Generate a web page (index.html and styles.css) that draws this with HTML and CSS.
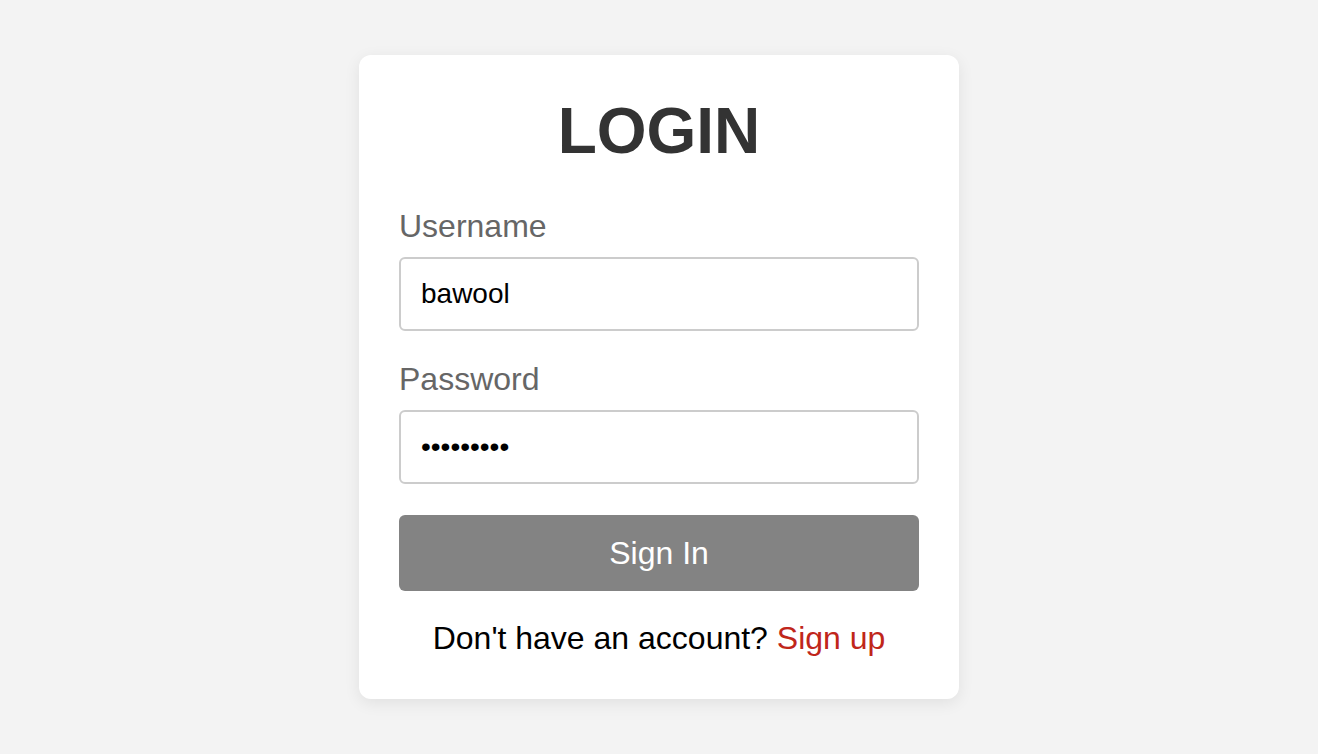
FILE: index.html
```html
<!DOCTYPE html>
<html lang="en">
<head>
  <meta charset="UTF-8" />
  <meta name="viewport" content="width=device-width, initial-scale=1.0" />
  <title>Login</title>
  <link rel="stylesheet" href="styles.css">
</head>
<body>
  <div class="container">
    <form class="login-box" onsubmit="return false;">
      <h1>LOGIN</h1>
      <div class="field">
        <label for="username">Username</label>
        <input type="text" id="username" value="bawool">
      </div>
      <div class="field">
        <label for="password">Password</label>
        <input type="password" id="password" value="bawool123">
      </div>
      <button type="submit">Sign In</button>
      <p class="signup">Don't have an account? <a href="#signup">Sign up</a></p>
    </form>
  </div>
</body>
</html>
```
FILE: styles.css
```css
body {
  font-family: 'Liberation Sans', Arial, Helvetica, sans-serif;
  background: #f3f3f3;
  margin: 0;
  padding: 0;
}
.container {
  display: flex;
  justify-content: center;
  align-items: center;
  height: 100vh;
}
.login-box {
  background: #ffffff;
  width: 600px;
  box-sizing: border-box;
  padding: 40px;
  border-radius: 12px;
  box-shadow: 0 4px 16px rgba(0,0,0,0.08);
}
h1 {
  margin: 4px 0 44px;
  font-size: 64px;
  line-height: 65px;
  text-align: center;
  color: #333333;
}
.field {
  display: flex;
  flex-direction: column;
  margin-bottom: 30px;
}
.field:last-of-type {
  margin-bottom: 31px;
}
label {
  font-size: 32px;
  line-height: 37px;
  color: #666666;
  margin-bottom: 12px;
}
input {
  height: 74px;
  box-sizing: border-box;
  padding: 0 20px;
  border: 2px solid #cccccc;
  border-radius: 6px;
  font-family: inherit;
  font-size: 28px;
  color: #000000;
  outline: none;
}
button {
  display: block;
  width: 100%;
  height: 76px;
  border: none;
  border-radius: 6px;
  background-color: #838383;
  color: #ffffff;
  font-family: inherit;
  font-size: 32px;
  cursor: pointer;
}
.signup {
  margin: 29px 0 2px;
  text-align: center;
  font-size: 32px;
  line-height: 37px;
  color: #000000;
}
.signup a {
  color: #c0261a;
  text-decoration: none;
}
```
